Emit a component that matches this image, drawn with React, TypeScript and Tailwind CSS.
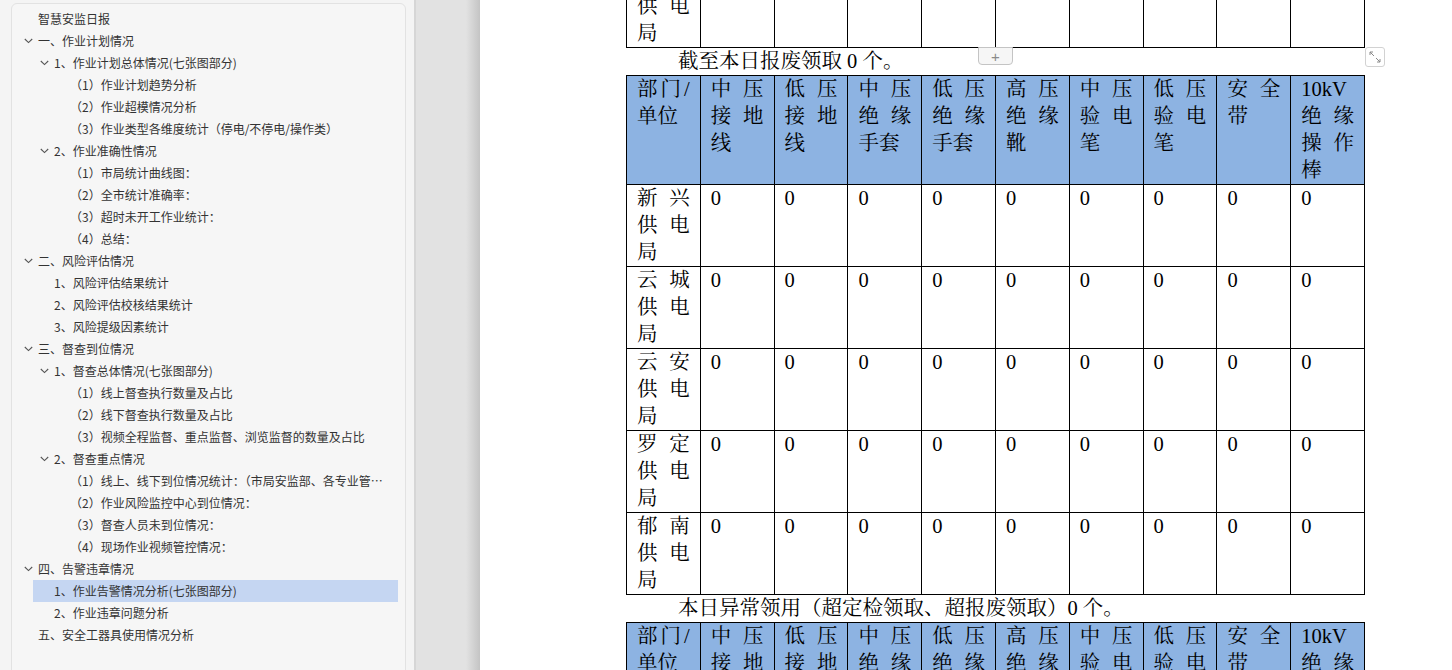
import clsx from "clsx";

type Node = { t: string; l: 0 | 1 | 2; c?: boolean; sel?: boolean };

const tree: Node[] = [
  { t: "智慧安监日报", l: 0 },
  { t: "一、作业计划情况", l: 0, c: true },
  { t: "1、作业计划总体情况(七张图部分)", l: 1, c: true },
  { t: "（1）作业计划趋势分析", l: 2 },
  { t: "（2）作业超模情况分析", l: 2 },
  { t: "（3）作业类型各维度统计（停电/不停电/操作类）", l: 2 },
  { t: "2、作业准确性情况", l: 1, c: true },
  { t: "（1）市局统计曲线图：", l: 2 },
  { t: "（2）全市统计准确率：", l: 2 },
  { t: "（3）超时未开工作业统计：", l: 2 },
  { t: "（4）总结：", l: 2 },
  { t: "二、风险评估情况", l: 0, c: true },
  { t: "1、风险评估结果统计", l: 1 },
  { t: "2、风险评估校核结果统计", l: 1 },
  { t: "3、风险提级因素统计", l: 1 },
  { t: "三、督查到位情况", l: 0, c: true },
  { t: "1、督查总体情况(七张图部分)", l: 1, c: true },
  { t: "（1）线上督查执行数量及占比", l: 2 },
  { t: "（2）线下督查执行数量及占比", l: 2 },
  { t: "（3）视频全程监督、重点监督、浏览监督的数量及占比", l: 2 },
  { t: "2、督查重点情况", l: 1, c: true },
  { t: "（1）线上、线下到位情况统计：（市局安监部、各专业管理部门、各供电局）", l: 2 },
  { t: "（2）作业风险监控中心到位情况：", l: 2 },
  { t: "（3）督查人员未到位情况：", l: 2 },
  { t: "（4）现场作业视频管控情况：", l: 2 },
  { t: "四、告警违章情况", l: 0, c: true },
  { t: "1、作业告警情况分析(七张图部分)", l: 1, sel: true },
  { t: "2、作业违章问题分析", l: 1 },
  { t: "五、安全工器具使用情况分析", l: 0 },
];

const indent = { 0: "ml-[5px]", 1: "ml-[21px]", 2: "ml-[37px]" };

const headers = [
  "部门/单位",
  "中压接地线",
  "低压接地线",
  "中压绝缘手套",
  "低压绝缘手套",
  "高压绝缘靴",
  "中压验电笔",
  "低压验电笔",
  "安全带",
  "10kV绝缘操作棒",
];

const units = ["新兴供电局", "云城供电局", "云安供电局", "罗定供电局", "郁南供电局"];

function Chevron() {
  return (
    <svg width="9" height="6" viewBox="0 0 9 6" fill="none">
      <polyline points="0.8,1 4.5,4.6 8.2,1" stroke="#555" strokeWidth="1.1" />
    </svg>
  );
}

const cell = "border border-black align-top px-[10px] py-0 text-justify";

function Header() {
  return (
    <tr className="bg-[#8db3e2]">
      {headers.map((h) => (
        <td key={h} className={cell}>
          {h}
        </td>
      ))}
    </tr>
  );
}

export default function App() {
  return (
    <div className="flex h-[670px] w-[1452px] overflow-hidden bg-white">
      <aside className="h-full w-[416px] shrink-0 border-r-2 border-[#d6d6d6] bg-[#f4f4f4] pl-[11px] pt-[3px] font-['Noto_Sans_CJK_SC',sans-serif]">
        <div className="h-[700px] w-[395px] rounded-md border border-[#e2e2e2] bg-[#f6f6f6] pt-[4px]">
          {tree.map((n) => (
            <div
              key={n.t}
              className={clsx(
                "mr-[7px] flex h-[22px] items-center",
                indent[n.l],
                n.sel && "bg-[#c5d6f2]"
              )}
            >
              <div className="flex w-[21px] shrink-0 items-center pl-[7px]">
                {n.c && <Chevron />}
              </div>
              <span className="truncate pr-[7px] text-[12px] leading-[22px] text-[#333]">{n.t}</span>
            </div>
          ))}
        </div>
      </aside>

      <div className="flex h-full w-[64px] shrink-0 justify-end bg-[#e2e2e2]">
        <div className="h-full w-[14px] bg-linear-to-r from-[#e2e2e2] to-[#c4c4c4]" />
      </div>

      <main className="relative h-full flex-1 overflow-hidden bg-white pl-[146px] font-['Liberation_Serif','Noto_Serif_CJK_SC','Noto_Sans_CJK_SC',serif] text-[20.5px] leading-[27px] text-black">
        <div className="-mt-[35px]">
          <table className="w-[739px] table-fixed border-collapse">
            <tbody>
              <tr>
                <td className={cell}>郁南供电局</td>
                {headers.slice(1).map((h) => (
                  <td key={h} className={cell}></td>
                ))}
              </tr>
            </tbody>
          </table>
        </div>

        <p className="h-[27px] pl-[52px]">截至本日报废领取 0 个。</p>

        <table className="w-[739px] table-fixed border-collapse">
          <tbody>
            <Header />
            {units.map((u) => (
              <tr key={u}>
                <td className={cell}>{u}</td>
                {headers.slice(1).map((h) => (
                  <td key={h} className={cell}>
                    0
                  </td>
                ))}
              </tr>
            ))}
          </tbody>
        </table>

        <p className="h-[27px] pl-[52px]">本日异常领用（超定检领取、超报废领取）0 个。</p>

        <table className="w-[739px] table-fixed border-collapse">
          <tbody>
            <Header />
          </tbody>
        </table>

        <button className="absolute left-[498px] top-[47px] flex h-[18px] w-[35px] items-center justify-center rounded-b-[4px] border border-[#c4c4c4] bg-[#f6f6f6] font-['Liberation_Sans',sans-serif] text-[15px] leading-none text-[#8a8a8a]">
          +
        </button>

        <div className="absolute left-[885px] top-[47px] flex h-[20px] w-[20px] items-center justify-center rounded-[3px] border border-[#d2d2d2] bg-white">
          <svg width="16" height="16" viewBox="0 0 16 16" fill="none" stroke="#8a8a8a" strokeWidth="1">
            <path d="M3 3 L7 7 M3 3 L3 6 M3 3 L6 3" />
            <path d="M13 13 L9 9 M13 13 L13 10 M13 13 L10 13" />
          </svg>
        </div>
      </main>
    </div>
  );
}
